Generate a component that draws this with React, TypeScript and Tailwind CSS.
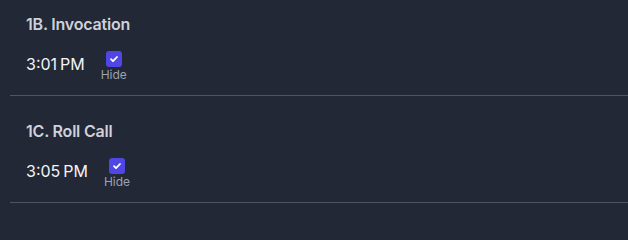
import React from "react";

function Check() {
  return (
    <div className="w-4 h-4 rounded-[3px] bg-[#4f46e5] flex items-center justify-center">
      <svg viewBox="0 0 16 16" className="w-4 h-4" fill="none">
        <path d="M5 8.2l2 2 4-4.2" stroke="white" strokeWidth="1.8" strokeLinecap="round" strokeLinejoin="round" />
      </svg>
    </div>
  );
}

function Section({ title, time, first }: { title: string; time: string; first?: boolean }) {
  return (
    <div className={`ml-[10px] border-b border-[#4b5563] pl-4 pb-3 ${first ? "pt-[12px]" : "pt-[23px]"}`}>
      <div className="text-base leading-6 font-semibold tracking-[-0.2px] text-[#cdd2da]">{title}</div>
      <div className="mt-[15px] flex items-start gap-4">
        <div className="mt-px text-base leading-6 text-[#f3f4f6]">{time}</div>
        <div className="flex flex-col items-center">
          <Check />
          <div className="text-xs leading-4 text-[#9ca3af]">Hide</div>
        </div>
      </div>
    </div>
  );
}

export default function App() {
  return (
    <div className="min-h-screen bg-[#222836]" style={{ fontFamily: "Inter, 'Noto Sans', sans-serif" }}>
      <Section title="1B. Invocation" time={"3:01\u2009PM"} first />
      <Section title="1C. Roll Call" time={"3:05\u2009PM"} />
    </div>
  );
}
